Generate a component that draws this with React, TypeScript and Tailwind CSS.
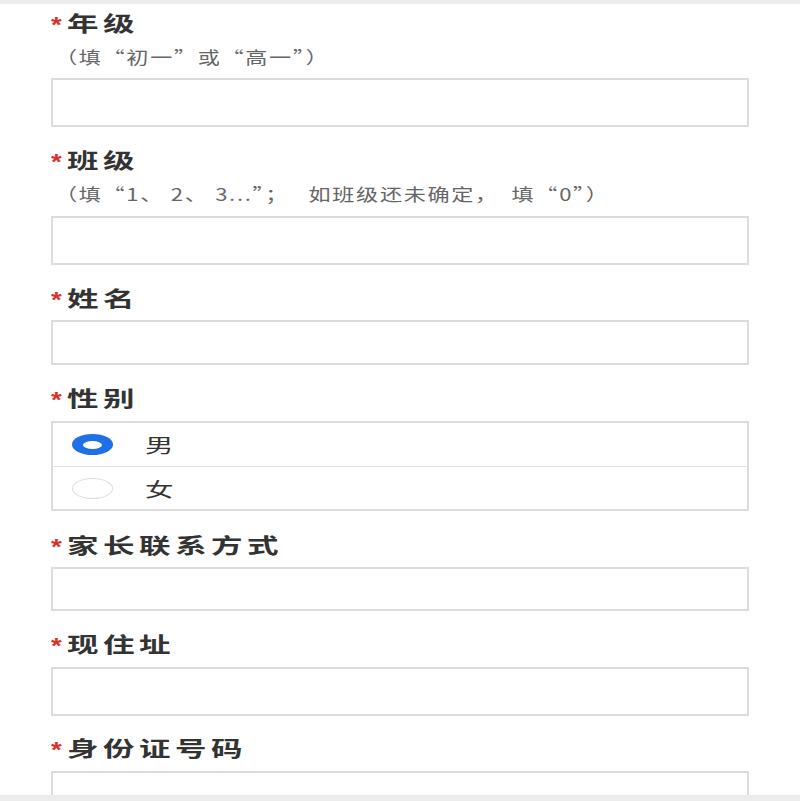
type TextField = {
  kind: "text";
  label: string;
  hint?: string;
  gap: string;
  box: string;
};

type RadioField = {
  kind: "radio";
  label: string;
  gap: string;
  options: string[];
};

type Field = TextField | RadioField;

const fields: Field[] = [
  {
    kind: "text",
    label: "年级",
    hint: "（填“初一”或“高一”）",
    gap: "mt-[4px]",
    box: "h-[49px] mt-[10px]",
  },
  {
    kind: "text",
    label: "班级",
    hint: "（填“1、 2、 3...”；　 如班级还未确定，　填“0”）",
    gap: "mt-[18px]",
    box: "h-[49px] mt-[11px]",
  },
  { kind: "text", label: "姓名", gap: "mt-[18px]", box: "h-[45px] mt-[9px]" },
  { kind: "radio", label: "性别", gap: "mt-[18px]", options: ["男", "女"] },
  { kind: "text", label: "家长联系方式", gap: "mt-[19px]", box: "h-[44px] mt-[9px]" },
  { kind: "text", label: "现住址", gap: "mt-[18px]", box: "h-[49px] mt-[10px]" },
  { kind: "text", label: "身份证号码", gap: "mt-[17px]", box: "h-[49px] mt-[10px]" },
];

function Label({ text, className }: { text: string; className: string }) {
  return (
    <div className={`flex items-center h-[28px] ${className}`}>
      <span className="w-[16px] pt-[6px] text-[22px] leading-none font-bold text-[#d8312c] font-['Liberation_Sans',sans-serif] scale-x-125 origin-left">
        *
      </span>
      <span className="inline-block whitespace-nowrap text-[21px] leading-none font-bold tracking-[3px] text-[#333] scale-x-150 origin-left">
        {text}
      </span>
    </div>
  );
}

function Radio({ checked }: { checked: boolean }) {
  if (checked) {
    return (
      <div className="w-[41px] h-[21px] rounded-[50%] bg-[#1f6fe9] flex items-center justify-center">
        <div className="w-[19px] h-[8px] rounded-[50%] bg-white" />
      </div>
    );
  }
  return <div className="w-[41px] h-[21px] rounded-[50%] border-[1.5px] border-[#dedede] bg-white" />;
}

export default function App() {
  return (
    <div className="w-[800px] h-[801px] bg-[#ececec] font-['Noto_Sans_CJK_SC',sans-serif]">
      <div className="h-[4px]" />
      <div className="h-[791px] bg-white overflow-hidden px-[51px]">
        {fields.map((field) => (
          <div key={field.label}>
            <Label text={field.label} className={field.gap} />
            {field.kind === "text" && field.hint && (
              <div className="mt-[8px] h-[24px] pl-[4px] flex items-center">
                <span className="inline-block whitespace-pre text-[17px] leading-none tracking-[1.3px] text-[#666] scale-x-[1.3] origin-left">
                  {field.hint}
                </span>
              </div>
            )}
            {field.kind === "text" && (
              <div className={`border-2 border-[#dcdcdc] bg-white ${field.box}`} />
            )}
            {field.kind === "radio" && (
              <div className="mt-[10px] border-2 border-[#dcdcdc] flex flex-col">
                {field.options.map((option, index) => (
                  <div
                    key={option}
                    className={`h-[43px] flex items-center pl-[19px] ${
                      index > 0 ? "border-t border-[#e2e2e2]" : ""
                    }`}
                  >
                    <Radio checked={index === 0} />
                    <span className="ml-[32px] inline-block text-[19px] leading-none text-[#333] scale-x-150 origin-left">
                      {option}
                    </span>
                  </div>
                ))}
              </div>
            )}
          </div>
        ))}
      </div>
    </div>
  );
}
